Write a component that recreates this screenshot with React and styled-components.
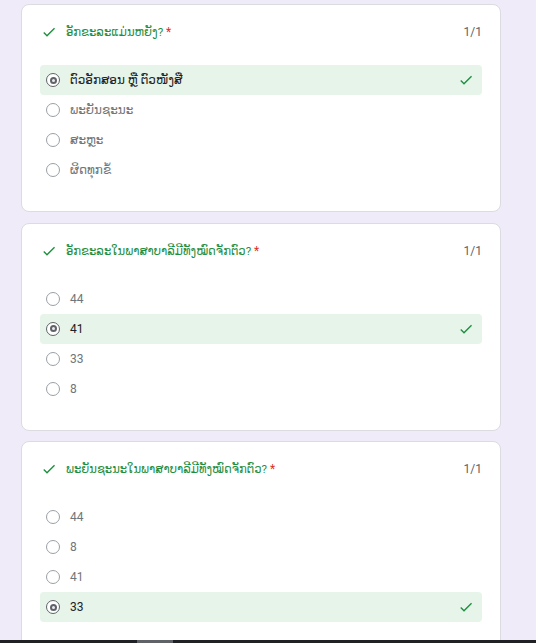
import styled, { createGlobalStyle } from "styled-components";

const GlobalStyle = createGlobalStyle`
  html, body {
    margin: 0;
    padding: 0;
    background: #f0ebf8;
  }
  body {
    font-family: Roboto, "DejaVu Sans", "Liberation Sans", sans-serif;
  }
`;

const questions = [
  {
    title: "ອັກຂະລະແມ່ນຫຍັງ?",
    options: ["ຕົວອັກສອນ ຫຼື ຕົວໜັງສື", "ພະຍັນຊະນະ", "ສະຫຼະ", "ຜິດທຸກຂໍ້"],
    answer: 0,
  },
  {
    title: "ອັກຂະລະໃນພາສາບາລີມີທັງໝົດຈັກຕົວ?",
    options: ["44", "41", "33", "8"],
    answer: 1,
  },
  {
    title: "ພະຍັນຊະນະໃນພາສາບາລີມີທັງໝົດຈັກຕົວ?",
    options: ["44", "8", "41", "33"],
    answer: 3,
  },
];

function CheckIcon({ size = 16 }) {
  return (
    <svg width={size} height={size} viewBox="0 0 24 24" fill="#1e8e3e">
      <path d="M9 16.17L4.83 12l-1.42 1.41L9 19 21 7l-1.41-1.41z" />
    </svg>
  );
}

function App() {
  return (
    <Page>
      <GlobalStyle />
      <Content>
        {questions.map((q, qi) => (
          <Card key={qi}>
            <Header>
              <IconBox>
                <CheckIcon />
              </IconBox>
              <Title>
                {q.title} <Star>*</Star>
              </Title>
              <Score>1/1</Score>
            </Header>
            <Options>
              {q.options.map((opt, oi) => {
                const chosen = oi === q.answer;
                return (
                  <Option key={oi} $chosen={chosen}>
                    <Radio $chosen={chosen} />
                    <Label $chosen={chosen}>{opt}</Label>
                    {chosen && (
                      <RightCheck>
                        <CheckIcon />
                      </RightCheck>
                    )}
                  </Option>
                );
              })}
            </Options>
          </Card>
        ))}
      </Content>
      <BottomBar>
        <BarThumb />
      </BottomBar>
    </Page>
  );
}

const Page = styled.div`
  height: 643px;
  display: flex;
  flex-direction: column;
  overflow: hidden;
`;

const Content = styled.div`
  flex: 1;
  overflow: hidden;
  padding: 4px 0 0 21px;
  display: flex;
  flex-direction: column;
  gap: 10.5px;
`;

const Card = styled.div`
  box-sizing: border-box;
  width: 480px;
  flex-shrink: 0;
  background: #fff;
  border: 1px solid #dadce0;
  border-radius: 8px;
  padding: 15px 18px 26px 18px;
`;

const Header = styled.div`
  display: flex;
  align-items: center;
  height: 24px;
`;

const IconBox = styled.div`
  width: 16px;
  height: 16px;
  margin-left: 1px;
  display: flex;
`;

const Title = styled.div`
  flex: 1;
  margin-left: 9px;
  font-size: 11.6px;
  color: #1e8e3e;
`;

const Star = styled.span`
  color: #d93025;
  font-size: 12px;
`;

const Score = styled.div`
  font-size: 12px;
  color: #5f6368;
`;

const Options = styled.div`
  margin-top: 21px;
  display: flex;
  flex-direction: column;
`;

const Option = styled.div`
  display: flex;
  align-items: center;
  height: 30px;
  padding: 0 8px 0 6px;
  border-radius: 4px;
  background: ${(p) => (p.$chosen ? "#e6f4ea" : "transparent")};
`;

const Radio = styled.div`
  box-sizing: border-box;
  width: 14px;
  height: 14px;
  border-radius: 50%;
  border: ${(p) => (p.$chosen ? "1.5px solid #5f6368" : "1px solid #9aa0a6")};
  display: flex;
  align-items: center;
  justify-content: center;
  background: #fff;

  &::after {
    content: "";
    display: ${(p) => (p.$chosen ? "block" : "none")};
    width: 7px;
    height: 7px;
    border-radius: 50%;
    box-sizing: border-box;
    border: 2px solid #5f6368;
    background: #e8eaed;
  }
`;

const Label = styled.div`
  flex: 1;
  margin-left: 10px;
  font-size: 12px;
  color: ${(p) => (p.$chosen ? "#202124" : "#70757a")};
`;

const RightCheck = styled.div`
  display: flex;
  width: 16px;
  height: 16px;
`;

const BottomBar = styled.div`
  height: 3px;
  flex-shrink: 0;
  background: #202124;
`;

const BarThumb = styled.div`
  margin-left: 137px;
  width: 36px;
  height: 3px;
  background: #5f6368;
`;

export default App;
